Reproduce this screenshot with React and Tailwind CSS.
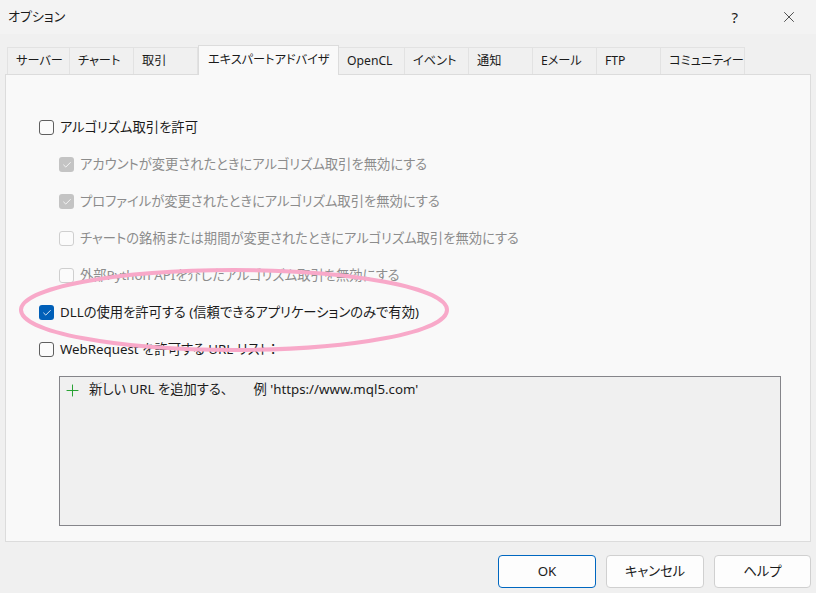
import React from 'react';
import { Check, Plus, X } from 'lucide-react';

const tabs = [
  { label: 'サーバー', w: 'w-[63px]' },
  { label: 'チャート', w: 'w-[64px]' },
  { label: '取引', w: 'w-[64px]' },
  { label: 'エキスパートアドバイザ', w: 'w-[141px]', active: true },
  { label: 'OpenCL', w: 'w-[66px]' },
  { label: 'イベント', w: 'w-[64px]' },
  { label: '通知', w: 'w-[64px]' },
  { label: 'Eメール', w: 'w-[64px]' },
  { label: 'FTP', w: 'w-[64px]' },
  { label: 'コミュニティー', w: 'w-[84px]' },
];

function Box({ checked, disabled }) {
  if (checked) {
    return (
      <span
        className={
          'flex w-[15px] h-[15px] shrink-0 items-center justify-center rounded-[3px] ' +
          (disabled ? 'bg-[#c4c4c4]' : 'bg-[#005fb8]')
        }
      >
        <Check size={10} strokeWidth={2} className="text-white" />
      </span>
    );
  }
  return (
    <span
      className={
        'block w-[15px] h-[15px] shrink-0 rounded-[3px] border bg-[#fbfbfb] ' +
        (disabled ? 'border-[#cfcfcf]' : 'border-[#5f5f5f]')
      }
    />
  );
}

function Row({ label, checked, disabled, indent }) {
  return (
    <div className={'flex h-[37px] items-center gap-[6px] whitespace-nowrap ' + (indent ? 'pl-[53px]' : 'pl-[33px]')}>
      <Box checked={checked} disabled={disabled} />
      <span className={disabled ? 'text-[#8c8c8c]' : 'text-[#1b1b1b]'}>{label}</span>
    </div>
  );
}

export default function App() {
  return (
    <div className="relative w-[816px] h-[593px] overflow-hidden bg-[#f0f0f0] text-[13.3px] text-[#1b1b1b] [font-family:'Noto_Sans','Noto_Sans_CJK_JP',sans-serif] [font-feature-settings:'palt']">
      {/* title bar */}
      <div className="flex h-[34px] items-center bg-[#f3f3f3] pl-[8px]">
        <span className="text-[13px]">オプション</span>
        <span className="ml-auto mr-[42px] text-[15px]">?</span>
        <span className="mr-[18px] flex items-center">
          <X size={18} strokeWidth={1} />
        </span>
      </div>

      <div className="px-[5px] pt-[11px]">
        {/* tabs */}
        <div className="flex h-[29px] items-end whitespace-nowrap pl-[2px] text-[12.2px]">
          {tabs.map((t) =>
            t.active ? (
              <div
                key={t.label}
                className={t.w + ' relative -mb-px z-10 flex h-[30px] shrink-0 items-center border border-b-0 border-[#dcdcdc] bg-[#f9f9f9] pl-[9px]'}
              >
                {t.label}
              </div>
            ) : (
              <div
                key={t.label}
                className={t.w + ' flex h-[27px] shrink-0 items-center border border-l-0 first:border-l border-b-0 border-[#e2e2e2] bg-[#f0f0f0] pl-[8px]'}
              >
                {t.label}
              </div>
            )
          )}
        </div>

        {/* panel */}
        <div className="h-[468px] w-[806px] border border-[#dcdcdc] bg-[#f9f9f9] pt-[34px]">
          <Row label="アルゴリズム取引を許可" />
          <Row label="アカウントが変更されたときにアルゴリズム取引を無効にする" checked disabled indent />
          <Row label="プロファイルが変更されたときにアルゴリズム取引を無効にする" checked disabled indent />
          <Row label="チャートの銘柄または期間が変更されたときにアルゴリズム取引を無効にする" disabled indent />
          <Row label="外部Python APIを介したアルゴリズム取引を無効にする" disabled indent />
          <Row label="DLLの使用を許可する (信頼できるアプリケーションのみで有効)" checked />
          <Row label="WebRequest を許可する URL リスト：" />

          <div className="ml-[53px] mt-[8px] h-[150px] w-[722px] border border-[#85858a] bg-[#f0f0f0]">
            <div className="flex h-[26px] items-center whitespace-nowrap pl-[3px]">
              <Plus size={19} strokeWidth={1.2} className="text-[#1f9e2a]" />
              <span className="ml-[7px]">新しい URL を追加する、</span>
              <span className="ml-[26px]">例 'https://www.mql5.com'</span>
            </div>
          </div>
        </div>

        {/* buttons */}
        <div className="mt-[13px] flex justify-end gap-[10px]">
          <button className="h-[33px] w-[98px] rounded-[4px] border border-[#0067c0] bg-[#fdfdfd]">OK</button>
          <button className="h-[33px] w-[98px] rounded-[4px] border border-[#d0d0d0] bg-[#fdfdfd]">キャンセル</button>
          <button className="h-[33px] w-[97px] rounded-[4px] border border-[#d0d0d0] bg-[#fdfdfd]">ヘルプ</button>
        </div>
      </div>

      {/* hand-drawn highlight */}
      <svg className="pointer-events-none absolute left-0 top-0" width="816" height="593">
        <ellipse cx="234" cy="310" rx="213" ry="40" fill="none" stroke="#f8a9c9" strokeWidth="4" />
      </svg>
    </div>
  );
}
